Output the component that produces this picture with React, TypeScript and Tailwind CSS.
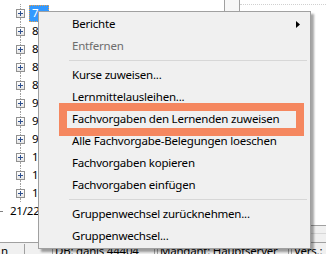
const treeRows = ["7a", "8", "8", "8", "8", "9", "9", "9", "1", "1", "1"];

const menuItems: ({ label: string; disabled?: boolean; submenu?: boolean } | "sep")[] = [
  { label: "Berichte", submenu: true },
  { label: "Entfernen", disabled: true },
  "sep",
  { label: "Kurse zuweisen..." },
  { label: "Lernmittelausleihen..." },
  { label: "Fachvorgaben den Lernenden zuweisen" },
  { label: "Alle Fachvorgabe-Belegungen loeschen" },
  { label: "Fachvorgaben kopieren" },
  { label: "Fachvorgaben einfügen" },
  "sep",
  { label: "Gruppenwechsel zurücknehmen..." },
  { label: "Gruppenwechsel..." },
];

const PlusBox = () => (
  <div className="flex h-[9px] w-[9px] items-center justify-center border border-[#919191] bg-gradient-to-b from-white to-[#e6e6e6]">
    <svg width="7" height="7" viewBox="0 0 7 7">
      <path d="M1 3.5H6M3.5 1V6" stroke="#2d4f8e" strokeWidth="1" />
    </svg>
  </div>
);

const App = () => {
  return (
    <div
      className="relative flex h-[254px] w-[326px] flex-col overflow-hidden bg-white text-[11.5px] tracking-[-0.22px] text-black"
      style={{ fontFamily: '"Noto Sans", "Open Sans", sans-serif' }}
    >
      {/* background window */}
      <div className="flex flex-1">
        <div className="w-[224px] pt-[4px]">
          {treeRows.map((t, i) => (
            <div key={i} className="flex h-[18px] items-center">
              <div className="w-[16px]" />
              <div className="flex h-full w-[9px] flex-col items-center">
                <div className="flex-1 border-l border-dotted border-[#a0a0a0]" />
                <PlusBox />
                <div className="flex-1 border-l border-dotted border-[#a0a0a0]" />
              </div>
              {i === 0 ? (
                <div className="ml-[4px] flex h-[17px] w-[20px] items-center border border-dotted border-[#e8a04a] bg-[#3399ff] pl-[2px] text-white">
                  {t}
                </div>
              ) : (
                <div className="ml-[7px]">{t}</div>
              )}
            </div>
          ))}
          <div className="flex h-[18px] items-center">
            <div className="h-px w-[3px] bg-[#808080]" />
            <div className="ml-[7px]">21/22</div>
          </div>
        </div>
        <div className="w-[16px] border-x border-[#a0a0a0] bg-[#f7f7f7]" />
        <div className="flex flex-1 flex-col">
          <div className="mt-[4px] border-t border-dotted border-[#d0d0d0]" />
          <div className="flex-1" />
          <div className="h-[17px] border-t border-[#a0a0a0] bg-[#f0f0f0]">
            <div className="mt-[7px] border-t border-[#d8d8d8]" />
          </div>
        </div>
      </div>

      {/* status bar */}
      <div className="flex h-[12px] items-start gap-[2px] border-t border-[#a0a0a0] bg-[#f0f0f0] pt-[1px] leading-[14px]">
        <div className="w-[25px] border-r border-[#a0a0a0] pl-[1px]">n</div>
        <div className="w-[23px] border-x border-[#a0a0a0]" />
        <div className="w-[103px] border-x border-[#a0a0a0] pl-[2px]">DB: danis 44404</div>
        <div className="w-[132px] border-x border-[#a0a0a0] pl-[2px]">Mandant: Hauptserver</div>
        <div className="flex-1 border-l border-[#a0a0a0] pl-[2px]">Vers.: D</div>
      </div>

      {/* context menu */}
      <div className="absolute left-[38px] top-[11px] w-[273px] border border-[#a0a0a0] bg-[#f0f0f0] py-[1px] shadow-[3px_3px_2px_rgba(0,0,0,0.35)]">
        {menuItems.map((item, i) =>
          item === "sep" ? (
            <div key={i} className="flex h-[7px] items-center pl-[30px] pr-[3px]">
              <div className="h-px w-full bg-[#d7d7d7]" />
            </div>
          ) : (
            <div
              key={i}
              className={`relative flex h-[22px] items-center pl-[33px] ${item.disabled ? "text-[#6d6d6d]" : ""}`}
            >
              {item.label}
              {item.submenu && (
                <svg className="absolute right-[10px] top-[8px]" width="4" height="7" viewBox="0 0 4 7">
                  <path d="M0 0L4 3.5L0 7Z" fill="#000" />
                </svg>
              )}
            </div>
          )
        )}
        {/* annotation box */}
        <div className="absolute left-[20px] top-[91px] h-[33px] w-[245px] border-[8px] border-[#f5875f]" />
      </div>
    </div>
  );
};

export default App;
